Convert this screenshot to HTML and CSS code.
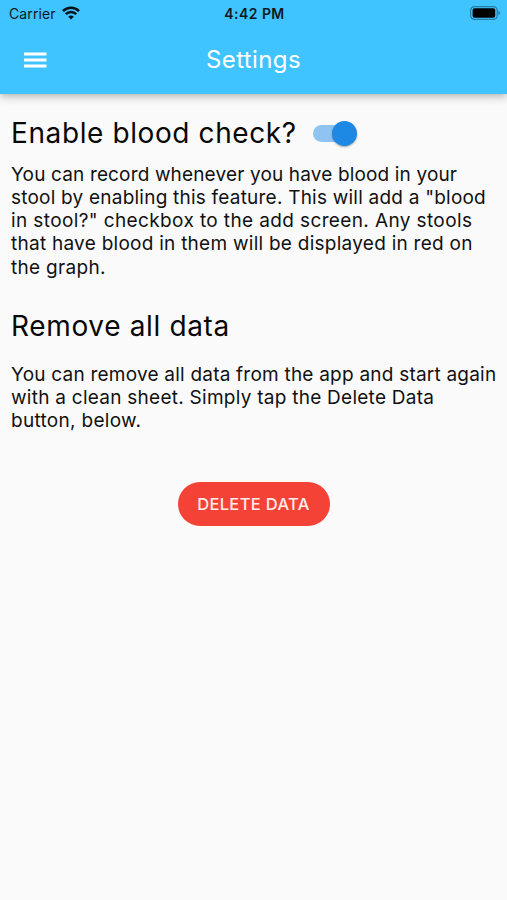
FILE: index.html
```html
<!DOCTYPE html>
<html lang="en">
<head>
<meta charset="utf-8">
<title>Settings</title>
<link rel="stylesheet" href="styles.css">
</head>
<body>
<header class="top">
  <div class="status">
    <div class="carrier"><span>Carrier</span>
      <svg class="wifi" width="18" height="14" viewBox="0 0 18 14"><path d="M1 5.1a11.4 11.4 0 0 1 16 0M3.8 8.2a7.4 7.4 0 0 1 10.4 0" fill="none" stroke="#06141a" stroke-width="2.6"/><path d="M9 13.6 6.2 10.7a4.2 4.2 0 0 1 5.6 0z" fill="#06141a"/></svg>
    </div>
    <div class="time">4:42 PM</div>
    <svg class="battery" width="31" height="14" viewBox="0 0 31 14"><rect x=".6" y=".6" width="26.6" height="12.8" rx="3.8" fill="none" stroke="#267da5" stroke-width="1.2"/><rect x="2.6" y="2.2" width="22.6" height="9.6" rx="2" fill="#000"/><path d="M28.3 4.8q1.8.7 1.8 2.2t-1.8 2.2z" fill="#267da5"/></svg>
  </div>
  <div class="bar">
    <svg class="menu" width="24" height="18" viewBox="0 0 24 18"><path d="M0 3h22.5M0 9h22.5M0 15h22.5" stroke="#fff" stroke-width="2.8"/></svg>
    <h1 class="title">Settings</h1>
  </div>
</header>
<main class="content">
  <div class="row"><h2 class="heading">Enable blood check?</h2><span class="switch" role="switch" aria-checked="true"><span class="thumb"></span></span></div>
  <p class="text first"><span class="l1">You can record whenever you have blood in your</span><br><span class="l2">stool by enabling this feature. This will add a "blood</span><br><span class="l3">in stool?" checkbox to the add screen. Any stools</span><br><span class="l4">that have blood in them will be displayed in red on</span><br><span class="l5">the graph.</span></p>
  <h2 class="heading second">Remove all data</h2>
  <p class="text"><span class="l6">You can remove all data from the app and start again</span><br><span class="l7">with a clean sheet. Simply tap the Delete Data</span><br><span class="l8">button, below.</span></p>
  <button class="delete">DELETE DATA</button>
</main>
</body>
</html>
```
FILE: styles.css
```css
* { box-sizing: border-box; }
body { margin: 0; min-height: 900px; background: #fafafa; color: #111; font-family: Inter, "Liberation Sans", sans-serif; }
h1, h2, p { margin: 0; font-weight: 400; }
.top { height: 94px; background: #40c4ff; box-shadow: 0 2px 5px -1px rgba(0,0,0,.12), 0 5px 7px rgba(0,0,0,.11), 0 1px 12px rgba(0,0,0,.08); }
.status { height: 26px; display: grid; grid-template-columns: 1fr auto 1fr; align-items: center; padding: 0 6px 0 9px; font-size: 14px; color: #10181c; }
.status span, .time { padding-top: 1px; }
.carrier { display: flex; align-items: center; gap: 6px; letter-spacing: .1px; }
.time { font-weight: 600; letter-spacing: .45px; margin-right: 1px; }
.battery { justify-self: end; }
.bar { height: 67px; display: grid; grid-template-columns: 100px 1fr 100px; align-items: center; }
.menu { margin-left: 24px; }
.title { color: #fff; font-size: 24px; text-align: center; letter-spacing: .4px; line-height: 30px; padding-top: 1px; }
.content { padding: 21px 11px 0; display: flex; flex-direction: column; }
.row { display: flex; align-items: center; height: 36px; }
.heading { font-size: 28px; line-height: 36px; letter-spacing: .6px; white-space: nowrap; color: #080808; }
.switch { width: 41px; height: 17px; margin-left: 16px; border-radius: 9px; background: #8fc3f2; display: flex; align-items: center; }
.thumb { flex: none; width: 25px; height: 25px; margin-left: 19px; border-radius: 50%; background: #1e88e5; box-shadow: 0 1px 2px rgba(0,0,0,.35); }
.text { font-size: 19px; line-height: 23.25px; letter-spacing: .3px; white-space: nowrap; }
.l1 { letter-spacing: .15px; }
.l2, .l6 { letter-spacing: .22px; }
.l3 { letter-spacing: .38px; }
.l4 { letter-spacing: .26px; }
.l7 { letter-spacing: .26px; }
.first { margin-top: 11.5px; }
.second { margin: 29px 0 19px; letter-spacing: .65px; }
.delete { align-self: center; margin-top: 49.5px; width: 152px; height: 44px; border: 0; border-radius: 22px; background: #f44336; color: #ffecea; font: 500 16.5px Inter, sans-serif; letter-spacing: .35px; padding: 0; }
```
